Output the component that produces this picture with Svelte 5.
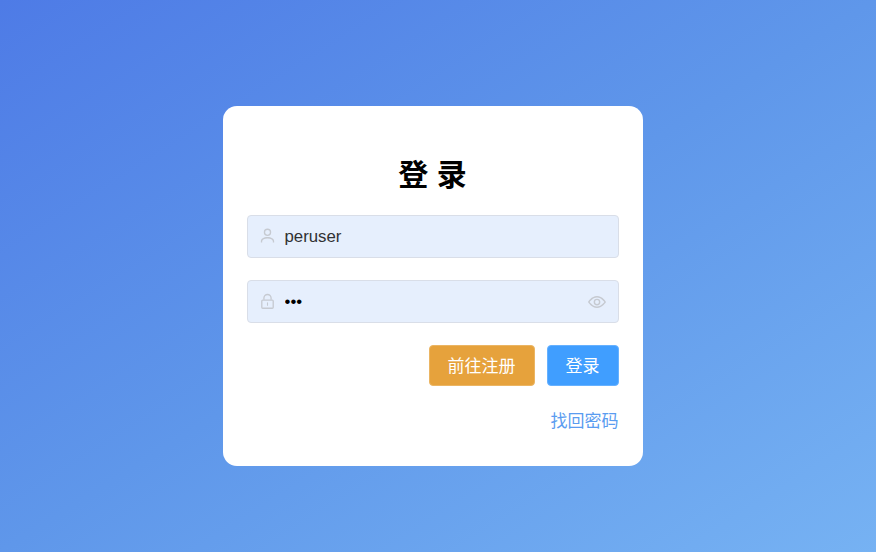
<script lang="ts">
	let username = $state('peruser');
	let password = $state('123');
	let showPassword = $state(false);
</script>

<div class="login-page">
	<form class="login-card" onsubmit={(e) => e.preventDefault()}>
		<h1>登 录</h1>

		<div class="field">
			<svg class="field-icon user-icon" viewBox="0 0 1024 1024" aria-hidden="true">
				<path d="M512 544a224 224 0 1 0 0-448 224 224 0 0 0 0 448zm0-80a144 144 0 1 1 0-288 144 144 0 0 1 0 288z" />
				<path d="M112 928v-64c0-160 170-256 400-256s400 96 400 256v64h-80v-64c0-104-136-176-320-176s-320 72-320 176v64z" />
			</svg>
			<input type="text" bind:value={username} />
		</div>

		<div class="field">
			<svg class="field-icon" viewBox="0 0 1024 1024" aria-hidden="true">
				<path d="M224 464a16 16 0 0 0-16 16v384a16 16 0 0 0 16 16h576a16 16 0 0 0 16-16V480a16 16 0 0 0-16-16H224zm0-80h576a96 96 0 0 1 96 96v384a96 96 0 0 1-96 96H224a96 96 0 0 1-96-96V480a96 96 0 0 1 96-96z" />
				<path d="M512 560a32 32 0 0 1 32 32v144a32 32 0 1 1-64 0V592a32 32 0 0 1 32-32zM688 400v-96a176 176 0 1 0-352 0v96h-80v-96a256 256 0 1 1 512 0v96h-80z" />
			</svg>
			<input type={showPassword ? 'text' : 'password'} bind:value={password} />
			<button type="button" class="eye" aria-label="显示密码" onclick={() => (showPassword = !showPassword)}>
				<svg viewBox="0 0 1024 1024" aria-hidden="true">
					<path d="M512 176c320 0 512 336 512 336S832 848 512 848 0 512 0 512s192-336 512-336zm0 80c-205 0-350 168-416 256 66 88 211 256 416 256s350-168 416-256c-66-88-211-256-416-256z" />
					<path d="M512 320a192 192 0 1 1 0 384 192 192 0 0 1 0-384zm0 80a112 112 0 1 0 0 224 112 112 0 0 0 0-224z" />
				</svg>
			</button>
		</div>

		<div class="actions">
			<button type="button" class="btn btn-register">前往注册</button>
			<button type="submit" class="btn btn-login">登录</button>
		</div>

		<div class="links">
			<a href="#forgot">找回密码</a>
		</div>
	</form>
</div>

<style>
	:global(body) {
		margin: 0;
		font-family: "Liberation Sans", "Noto Sans CJK SC", sans-serif;
	}

	.login-page {
		box-sizing: border-box;
		height: 552px;
		display: flex;
		justify-content: center;
		align-items: center;
		padding: 20px 11px 0 0;
		background: linear-gradient(to bottom right, #4e7be6 0%, #5f97ea 50%, #76b2f3 100%);
	}

	.login-card {
		box-sizing: border-box;
		width: 420px;
		height: 360px;
		padding: 49px 24px 0;
		background: #fff;
		border-radius: 14px;
	}

	h1 {
		margin: 0 0 20px;
		height: 40px;
		font-size: 30px;
		line-height: 40px;
		font-weight: 700;
		text-align: center;
		color: #000;
	}

	.field {
		box-sizing: border-box;
		display: flex;
		align-items: center;
		width: 372px;
		height: 43px;
		margin-bottom: 22px;
		padding: 0 12px 0 11.5px;
		background: #e6effd;
		border: 1px solid #d9dee8;
		border-radius: 4px;
	}

	.field-icon {
		width: 17px;
		height: 17px;
		flex-shrink: 0;
		margin-right: 8.5px;
		fill: #c6cad1;
	}
	.user-icon {
		margin-top: -2px;
	}

	input {
		flex: 1;
		min-width: 0;
		padding: 0;
		border: 0;
		outline: 0;
		background: transparent;
		font: inherit;
		font-size: 16.8px;
		color: #303133;
	}
	input[type='password'] {
		color: #000;
	}

	.eye {
		display: flex;
		padding: 0;
		border: 0;
		background: none;
		cursor: pointer;
	}
	.eye svg {
		width: 18px;
		height: 18px;
		fill: #c6cad1;
	}

	.actions {
		display: flex;
		justify-content: flex-end;
		gap: 12px;
	}

	.btn {
		box-sizing: border-box;
		height: 41px;
		padding: 0 18px 3px;
		border: 1px solid transparent;
		border-radius: 4px;
		font-family: inherit;
		font-size: 17px;
		color: #fff;
		cursor: pointer;
	}
	.btn-register { background: #e6a23c; border-color: #ebb563; }
	.btn-login { background: #409eff; border-color: #66b1ff; }

	.links {
		margin-top: 24px;
		text-align: right;
	}
	.links a {
		font-size: 17px;
		line-height: 24px;
		color: #5a9cf0;
		text-decoration: none;
	}
</style>
